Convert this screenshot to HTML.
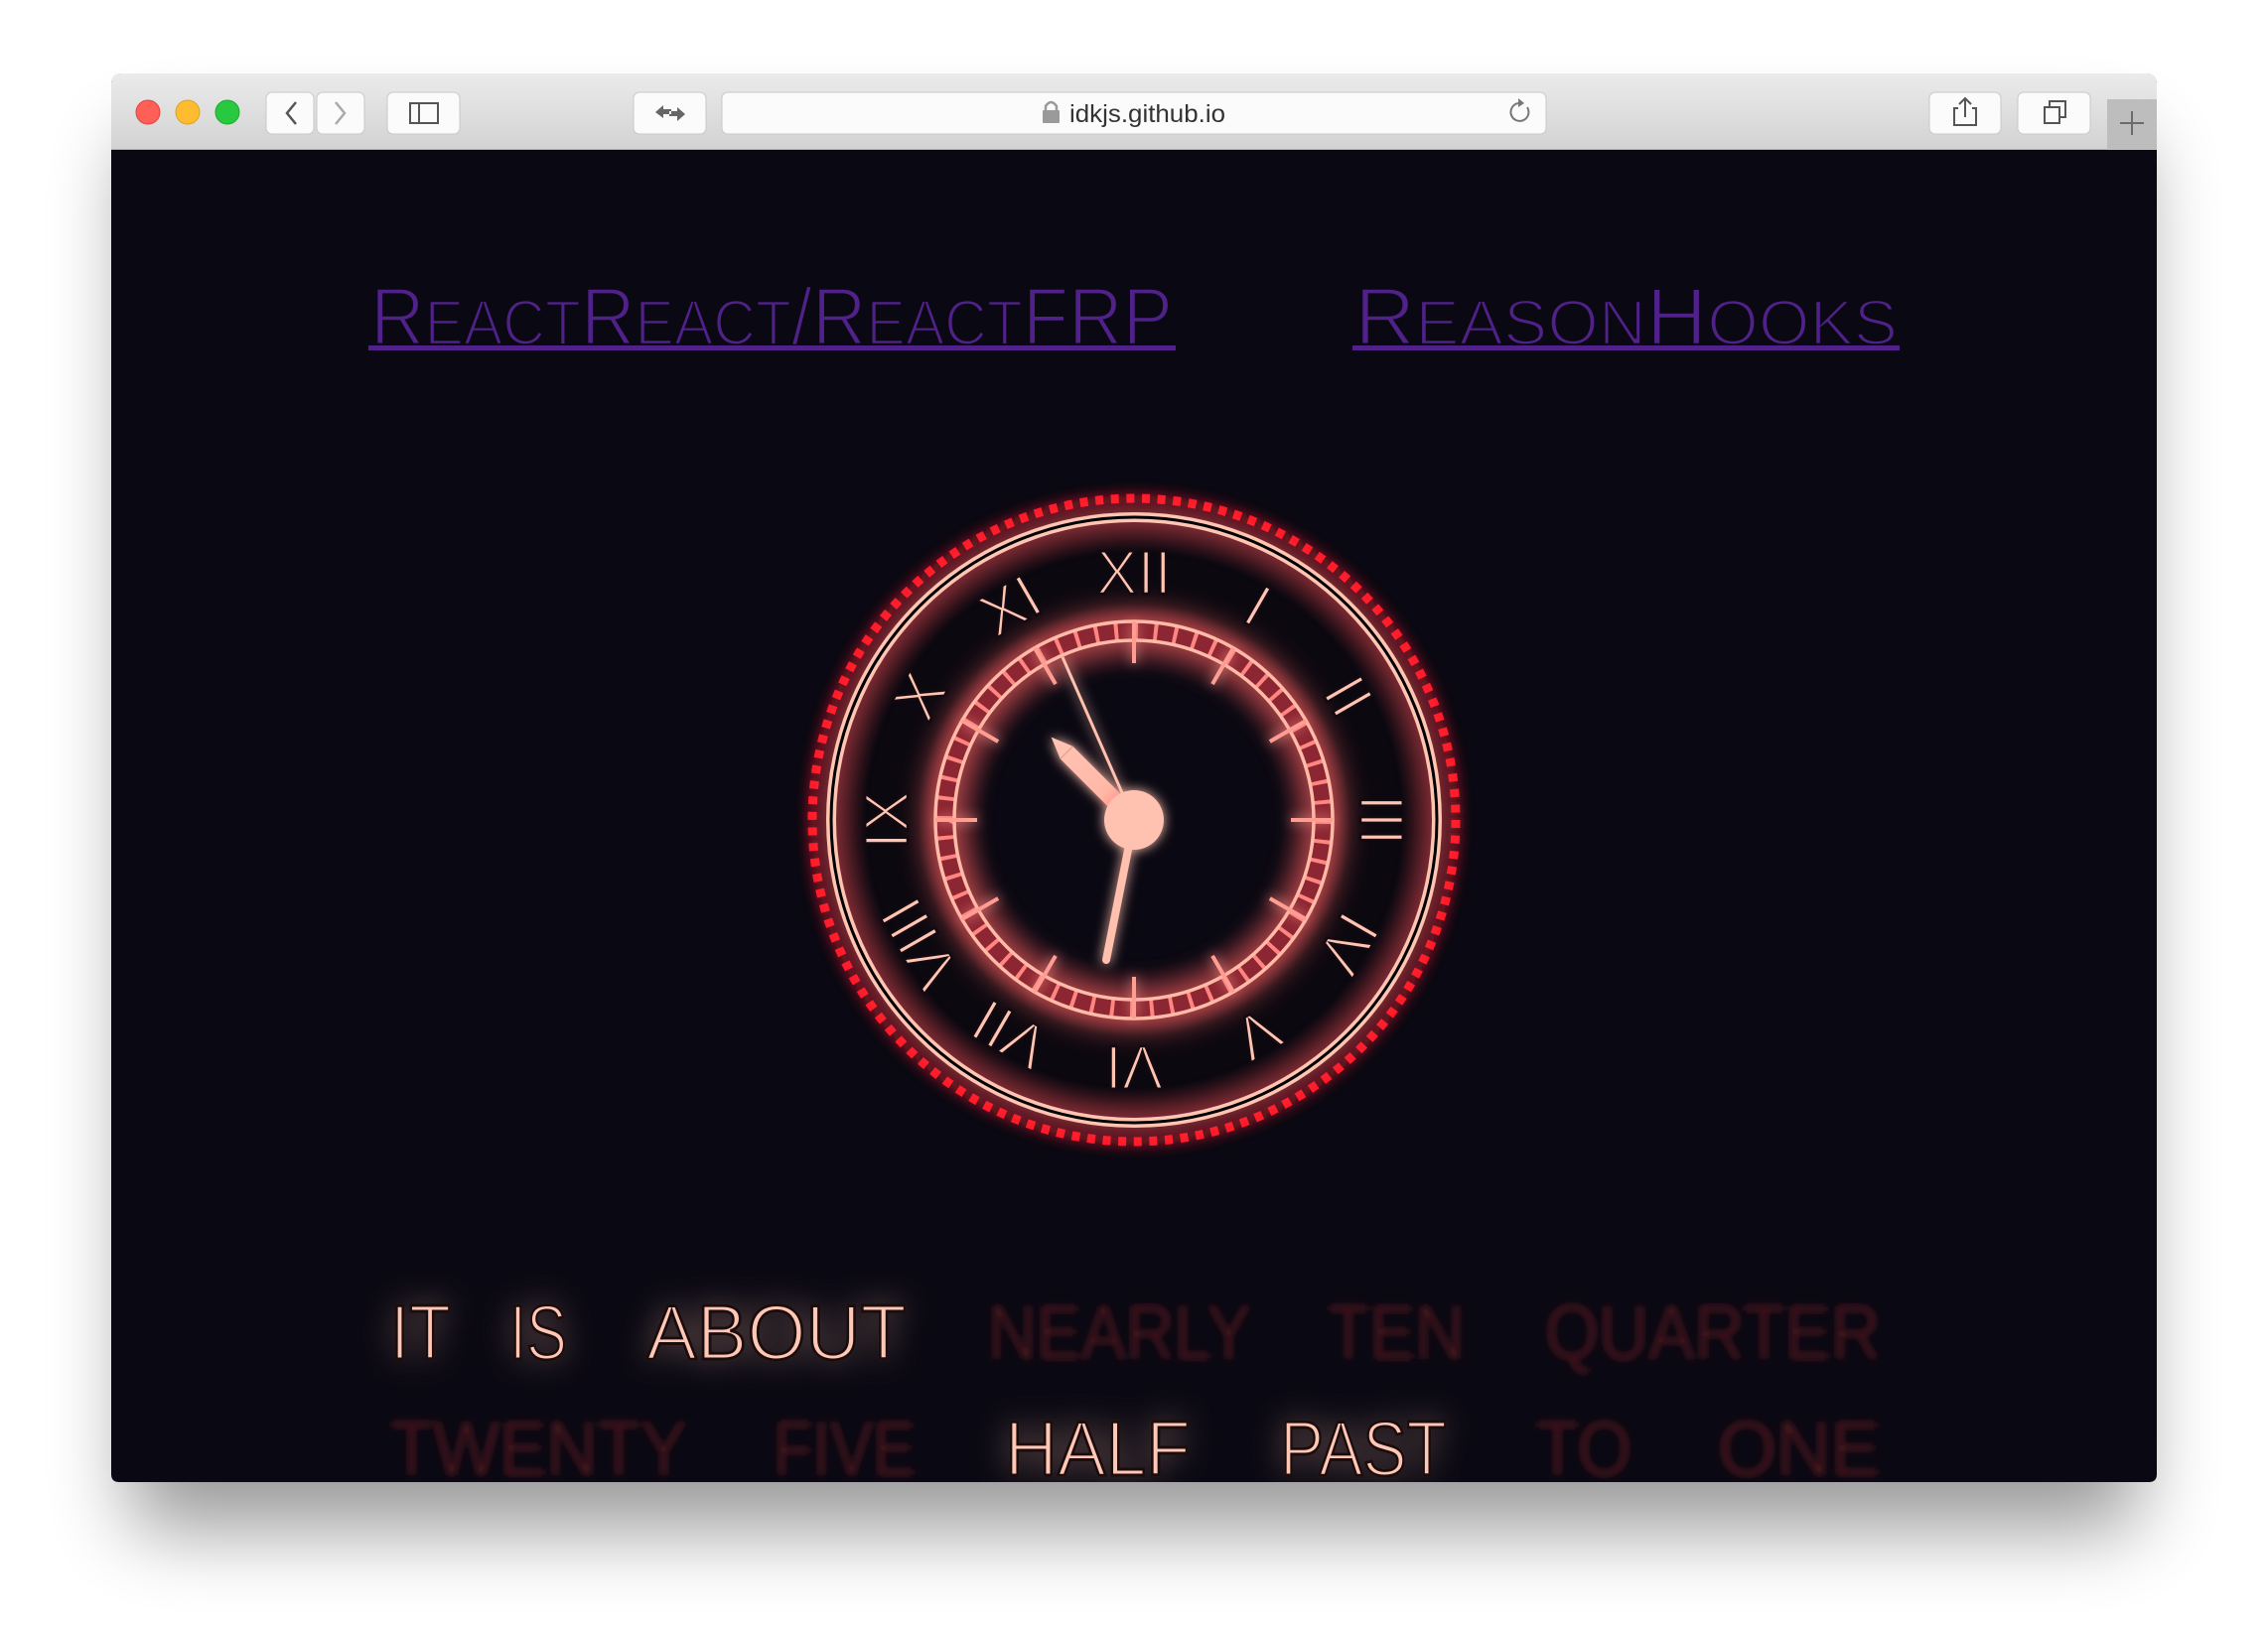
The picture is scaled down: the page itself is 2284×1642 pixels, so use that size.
<!DOCTYPE html>
<html><head><meta charset="utf-8">
<style>
html,body{margin:0;padding:0;width:2284px;height:1642px;overflow:hidden;background:#fff;}
svg{display:block}
</style></head>
<body>
<svg width="2284" height="1642" viewBox="0 0 2284 1642" xmlns="http://www.w3.org/2000/svg">
<defs>
  <filter id="shadow" x="-10%" y="-10%" width="120%" height="130%">
    <feGaussianBlur stdDeviation="40"/>
  </filter>
  <clipPath id="win"><path d="M112 151 H2172 V1485 Q2172 1493 2164 1493 H120 Q112 1493 112 1485 Z"/></clipPath>
  <linearGradient id="tb" x1="0" y1="0" x2="0" y2="1">
    <stop offset="0" stop-color="#ebebeb"/><stop offset="1" stop-color="#d2d2d2"/>
  </linearGradient>
  <filter id="glow" x="-30%" y="-30%" width="160%" height="160%">
    <feGaussianBlur stdDeviation="6" result="b"/>
    <feMerge><feMergeNode in="b"/><feMergeNode in="SourceGraphic"/></feMerge>
  </filter>
  <filter id="bigglow" x="-30%" y="-30%" width="160%" height="160%">
    <feGaussianBlur stdDeviation="14"/>
  </filter>
  <filter id="dim" x="-20%" y="-40%" width="140%" height="180%">
    <feGaussianBlur stdDeviation="3.5"/>
  </filter>
  <filter id="wordglow" x="-20%" y="-40%" width="140%" height="180%">
    <feGaussianBlur stdDeviation="16" result="b"/>
    <feComponentTransfer in="b" result="c"><feFuncA type="linear" slope="0.6"/></feComponentTransfer>
    <feMerge><feMergeNode in="c"/><feMergeNode in="SourceGraphic"/></feMerge>
  </filter>
  <radialGradient id="ringglow" cx="1142" cy="826" r="330" gradientUnits="userSpaceOnUse">
    <stop offset="0" stop-color="#0a0812"/>
    <stop offset="0.45" stop-color="#0a0812"/>
    <stop offset="0.6" stop-color="#5a1a22"/>
    <stop offset="0.66" stop-color="#0d080f"/>
    <stop offset="0.82" stop-color="#0b0810"/>
    <stop offset="0.93" stop-color="#6a1e28"/>
    <stop offset="1" stop-color="#0a0812" stop-opacity="0"/>
  </radialGradient>
  <linearGradient id="hh" x1="0" y1="0" x2="0" y2="-118" gradientUnits="userSpaceOnUse">
    <stop offset="0" stop-color="#ff6f6a"/><stop offset="0.35" stop-color="#ffb8a8"/><stop offset="1" stop-color="#ffc4b4"/>
  </linearGradient>
</defs>

<!-- window shadow -->
<rect x="130" y="140" width="2024" height="1400" rx="20" fill="#000" opacity="0.4" filter="url(#shadow)"/>
<!-- window -->
<rect x="112" y="74" width="2060" height="1419" rx="10" fill="#0a0812"/>
<path d="M122 74 H2162 Q2172 74 2172 84 V151 H112 V84 Q112 74 122 74 Z" fill="url(#tb)"/>
<line x1="112" y1="150.5" x2="2172" y2="150.5" stroke="#b0b0b0" stroke-width="1"/>

<!-- traffic lights -->
<circle cx="149" cy="113" r="12" fill="#fe5f57" stroke="#e0443e" stroke-width="1"/>
<circle cx="189" cy="113" r="12" fill="#febc2e" stroke="#dea123" stroke-width="1"/>
<circle cx="229" cy="113" r="12" fill="#28c840" stroke="#1aab29" stroke-width="1"/>

<!-- buttons -->
<g fill="#fbfbfb" stroke="#c8c8c8" stroke-width="1">
  <rect x="268" y="93" width="48" height="42" rx="6"/>
  <rect x="319" y="93" width="48" height="42" rx="6"/>
  <rect x="390" y="93" width="73" height="42" rx="6"/>
  <rect x="638" y="93" width="73" height="42" rx="6"/>
  <rect x="727" y="93" width="830" height="42" rx="6"/>
  <rect x="1943" y="93" width="72" height="42" rx="6"/>
  <rect x="2032" y="93" width="73" height="42" rx="6"/>
</g>
<rect x="2122" y="100" width="50" height="51" fill="#bdbdbd"/>
<path d="M2147 112 V136 M2135 124 H2159" stroke="#6b6b6b" stroke-width="2"/>
<path d="M298 103 L289 114 L298 125" fill="none" stroke="#555" stroke-width="2.5"/>
<path d="M338 103 L347 114 L338 125" fill="none" stroke="#aaa" stroke-width="2.5"/>
<rect x="413" y="104" width="28" height="20" fill="none" stroke="#555" stroke-width="2"/>
<line x1="422" y1="104" x2="422" y2="124" stroke="#555" stroke-width="2"/>
<path d="M660 113 L668 106 V110 H676 V115 H668 V119 Z M690 115 L682 108 V112 H674 V117 H682 V122 Z" fill="#666"/>
<rect x="1050" y="111" width="17" height="13" rx="1" fill="#9a9a9a"/>
<path d="M1053 112 V107 Q1058.5 99 1064 107 V112" fill="none" stroke="#9a9a9a" stroke-width="2.5"/>
<text x="1077" y="123" font-family="Liberation Sans, sans-serif" font-size="25" fill="#333" textLength="157" lengthAdjust="spacingAndGlyphs">idkjs.github.io</text>
<path d="M1538 108 A9 9 0 1 1 1529 104" fill="none" stroke="#777" stroke-width="2"/>
<path d="M1529 99 L1535 104 L1529 108 Z" fill="#777"/>
<path d="M1972 109 H1968 V126 H1990 V109 H1986 M1979 118 V100 M1973 105 L1979 99 L1985 105" fill="none" stroke="#555" stroke-width="2"/>
<rect x="2059" y="108" width="15" height="16" fill="none" stroke="#555" stroke-width="2"/>
<path d="M2064 108 V102 H2080 V118 H2074" fill="none" stroke="#555" stroke-width="2"/>

<g clip-path="url(#win)">
<rect x="112" y="151" width="2060" height="1342" fill="#0a0812"/>

<!-- heading links -->
<g fill="#4f2189" font-family="'Liberation Sans Narrow','Liberation Sans',sans-serif">
  <g stroke="#0a0812" stroke-width="2.5">
  <text x="373" y="347" font-size="82" textLength="808" lengthAdjust="spacingAndGlyphs">R<tspan font-size="64">EACT</tspan>R<tspan font-size="64">EACT</tspan>/R<tspan font-size="64">EACT</tspan>FRP</text>
  <text x="1364" y="347" font-size="82" textLength="547" lengthAdjust="spacingAndGlyphs">R<tspan font-size="64">EASON</tspan>H<tspan font-size="64">OOKS</tspan></text>
  </g>
  <rect x="371" y="348" width="813" height="5"/>
  <rect x="1362" y="348" width="551" height="5"/>
</g>

<!-- clock -->
<circle cx="1142" cy="826" r="330" fill="url(#ringglow)"/>
<circle cx="1142" cy="826" r="324" fill="none" stroke="#ff1428" stroke-width="9" stroke-dasharray="8 7.66" filter="url(#glow)"/>
<circle cx="1142" cy="826" r="305" fill="none" stroke="#ff6a6a" stroke-width="14" opacity="0.5" filter="url(#bigglow)"/>
<circle cx="1142" cy="826" r="305" fill="none" stroke="#ffc4b2" stroke-width="10"/>
<circle cx="1142" cy="826" r="305" fill="none" stroke="#000" stroke-width="3"/>

<!-- inner ring -->
<circle cx="1142" cy="826" r="191" fill="none" stroke="#ff6a6a" stroke-width="40" opacity="0.6" filter="url(#bigglow)"/>
<circle cx="1142" cy="826" r="190.5" fill="none" stroke="#8c2632" stroke-width="19"/>
<circle cx="1142" cy="826" r="191" fill="none" stroke="#ff8581" stroke-width="19" transform="rotate(-90 1142 826)" pathLength="1200" style="stroke-dasharray:4 16"/>
<circle cx="1142" cy="826" r="200" fill="none" stroke="#ffbaa8" stroke-width="3.5"/>
<circle cx="1142" cy="826" r="181" fill="none" stroke="#ffbaa8" stroke-width="3.5"/>
<g stroke="#ff9d92" stroke-width="4" filter="url(#glow)">
  <line x1="1142" y1="626" x2="1142" y2="668" transform="rotate(0 1142 826)"/>
  <line x1="1142" y1="626" x2="1142" y2="668" transform="rotate(30 1142 826)"/>
  <line x1="1142" y1="626" x2="1142" y2="668" transform="rotate(60 1142 826)"/>
  <line x1="1142" y1="626" x2="1142" y2="668" transform="rotate(90 1142 826)"/>
  <line x1="1142" y1="626" x2="1142" y2="668" transform="rotate(120 1142 826)"/>
  <line x1="1142" y1="626" x2="1142" y2="668" transform="rotate(150 1142 826)"/>
  <line x1="1142" y1="626" x2="1142" y2="668" transform="rotate(180 1142 826)"/>
  <line x1="1142" y1="626" x2="1142" y2="668" transform="rotate(210 1142 826)"/>
  <line x1="1142" y1="626" x2="1142" y2="668" transform="rotate(240 1142 826)"/>
  <line x1="1142" y1="626" x2="1142" y2="668" transform="rotate(270 1142 826)"/>
  <line x1="1142" y1="626" x2="1142" y2="668" transform="rotate(300 1142 826)"/>
  <line x1="1142" y1="626" x2="1142" y2="668" transform="rotate(330 1142 826)"/>
</g>

<!-- numerals -->
<g fill="#ffc4b2" stroke="#120a10" stroke-width="2.5" font-family="'Liberation Sans Narrow','Liberation Sans',sans-serif" font-size="62" text-anchor="middle">
  <text x="1142" y="598" transform="rotate(0 1142 826)">XII</text>
  <text x="1142" y="598" transform="rotate(30 1142 826)">I</text>
  <text x="1142" y="598" transform="rotate(60 1142 826)">II</text>
  <text x="1142" y="598" transform="rotate(90 1142 826)">III</text>
  <text x="1142" y="598" transform="rotate(120 1142 826)">IV</text>
  <text x="1142" y="598" transform="rotate(150 1142 826)">V</text>
  <text x="1142" y="598" transform="rotate(180 1142 826)">VI</text>
  <text x="1142" y="598" transform="rotate(210 1142 826)">VII</text>
  <text x="1142" y="598" transform="rotate(240 1142 826)">VIII</text>
  <text x="1142" y="598" transform="rotate(270 1142 826)">IX</text>
  <text x="1142" y="598" transform="rotate(300 1142 826)">X</text>
  <text x="1142" y="598" transform="rotate(330 1142 826)">XI</text>
</g>

<!-- hands -->
<g filter="url(#glow)">
  <line x1="1142" y1="826" x2="1114" y2="967" stroke="#ffc0ae" stroke-width="8" stroke-linecap="round"/>
  <line x1="1142" y1="826" x2="1070" y2="662" stroke="#ffc0ae" stroke-width="3"/>
  <g transform="translate(1142 826) rotate(-45)">
    <path d="M-9 0 L-9 -96 L0 -118 L9 -96 L9 0 Z" fill="url(#hh)"/>
    <line x1="-9" y1="-96" x2="9" y2="-96" stroke="#e59a8c" stroke-width="1"/>
  </g>
  <circle cx="1142" cy="826" r="30" fill="#ffc2b0"/>
</g>

<!-- word clock -->
<g font-family="'Liberation Sans Narrow','Liberation Sans',sans-serif" font-size="78">
  <g fill="#45151b" filter="url(#dim)">
    <text x="995" y="1369" textLength="265" lengthAdjust="spacingAndGlyphs">NEARLY</text>
    <text x="1337" y="1369" textLength="138" lengthAdjust="spacingAndGlyphs">TEN</text>
    <text x="1556" y="1369" textLength="338" lengthAdjust="spacingAndGlyphs">QUARTER</text>
    <text x="393" y="1486" textLength="299" lengthAdjust="spacingAndGlyphs">TWENTY</text>
    <text x="779" y="1486" textLength="143" lengthAdjust="spacingAndGlyphs">FIVE</text>
    <text x="1547" y="1486" textLength="96" lengthAdjust="spacingAndGlyphs">TO</text>
    <text x="1730" y="1486" textLength="164" lengthAdjust="spacingAndGlyphs">ONE</text>
  </g>
  <g fill="#ffc8b6" stroke="#1a0c10" stroke-width="3" filter="url(#wordglow)">
    <text x="393" y="1369" textLength="61" lengthAdjust="spacingAndGlyphs">IT</text>
    <text x="513" y="1369" textLength="58" lengthAdjust="spacingAndGlyphs">IS</text>
    <text x="651" y="1369" textLength="262" lengthAdjust="spacingAndGlyphs">ABOUT</text>
    <text x="1012" y="1486" textLength="187" lengthAdjust="spacingAndGlyphs">HALF</text>
    <text x="1289" y="1486" textLength="168" lengthAdjust="spacingAndGlyphs">PAST</text>
  </g>
</g>
</g>
</svg>
</body></html>
